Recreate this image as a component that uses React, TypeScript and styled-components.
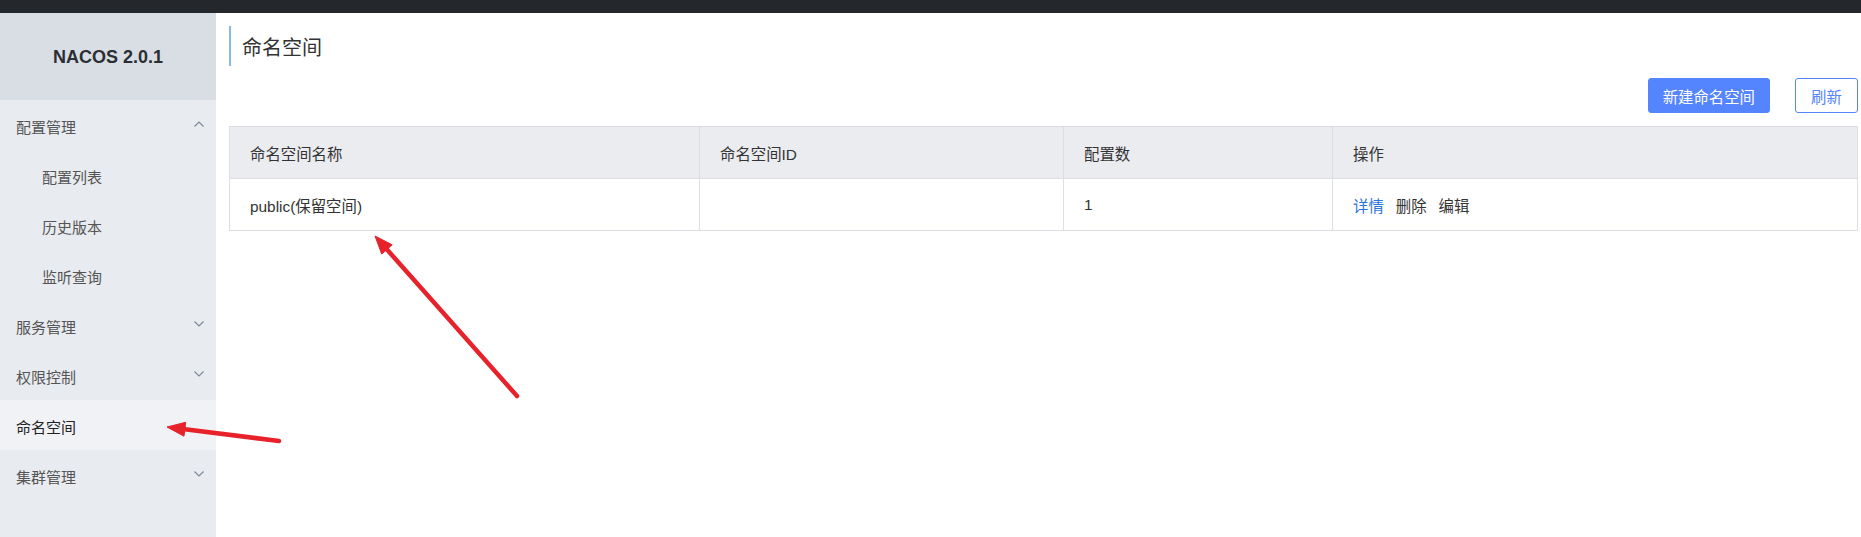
import React from 'react'
import styled, { createGlobalStyle } from 'styled-components'

const GlobalStyle = createGlobalStyle`
  html, body {
    margin: 0;
    padding: 0;
    background: #fff;
  }
  body {
    font-family: 'Liberation Sans', 'Noto Sans CJK SC', sans-serif;
    font-size: 15.4px;
    color: #333;
  }
`

const Page = styled.div`
  position: relative;
  width: 1861px;
  height: 537px;
  display: flex;
  flex-direction: column;
  overflow: hidden;
`

const TopBar = styled.div`
  height: 13px;
  background: #24282d;
  flex-shrink: 0;
`

const Body = styled.div`
  flex: 1;
  display: flex;
`

const Sidebar = styled.aside`
  width: 216px;
  flex-shrink: 0;
  background: #e8ebf0;
  display: flex;
  flex-direction: column;
`

const Logo = styled.div`
  height: 87px;
  background: #d9dee4;
  display: flex;
  align-items: center;
  justify-content: center;
  font-family: 'Liberation Sans', sans-serif;
  font-weight: bold;
  font-size: 18px;
  color: #2b2f33;
  padding-top: 2px;
  box-sizing: border-box;
`

const MenuItem = styled.div<{ sub?: boolean; active?: boolean }>`
  height: 50px;
  display: flex;
  align-items: center;
  justify-content: space-between;
  padding: 3px 12px 0 ${({ sub }) => (sub ? '42px' : '16px')};
  box-sizing: border-box;
  font-size: 15px;
  color: ${({ active }) => (active ? '#222' : '#555')};
  background: ${({ active }) => (active ? '#f0f2f6' : 'transparent')};
`

const Chevron = styled.svg`
  width: 10px;
  height: 6px;
  margin-top: -5px;
`

const Main = styled.main`
  flex: 1;
  padding: 13px 4px 0 13px;
  display: flex;
  flex-direction: column;
`

const Heading = styled.div`
  height: 40px;
  border-left: 2px solid #87b8e6;
  padding-left: 11px;
  display: flex;
  align-items: center;
  font-size: 20px;
  color: #333;
`

const Toolbar = styled.div`
  margin-top: 12px;
  display: flex;
  justify-content: flex-end;
  gap: 25px;
`

const Button = styled.button<{ primary?: boolean }>`
  height: 35px;
  padding: 0 ${({ primary }) => (primary ? '14px' : '15px')};
  min-width: ${({ primary }) => (primary ? '121px' : '63px')};
  border-radius: 3px;
  border: 1px solid #5584ff;
  background: ${({ primary }) => (primary ? '#5584ff' : '#fff')};
  color: ${({ primary }) => (primary ? '#fff' : '#5584ff')};
  font-family: 'Liberation Sans', 'Noto Sans CJK SC', sans-serif;
  font-size: 15.4px;
  cursor: pointer;
`

const Table = styled.table`
  margin-top: 13px;
  width: 1628px;
  border-collapse: collapse;
  table-layout: fixed;
`

const Th = styled.th`
  height: 51px;
  padding: 0 20px;
  text-align: left;
  font-weight: normal;
  background: #ebecf0;
  border: 1px solid #dcdee3;
  color: #333;
`

const Td = styled.td`
  height: 51px;
  padding: 0 20px;
  border: 1px solid #dcdee3;
  color: #333;
`

const Action = styled.a<{ link?: boolean }>`
  color: ${({ link }) => (link ? '#2a74db' : '#333')};
  margin-right: 12px;
  text-decoration: none;
`

const Overlay = styled.svg`
  position: absolute;
  left: 0;
  top: 0;
  pointer-events: none;
`

function ChevronIcon({ up }: { up?: boolean }) {
  return (
    <Chevron viewBox="0 0 10 6">
      <polyline
        points={up ? '0.5,5.5 5,1 9.5,5.5' : '0.5,0.5 5,5 9.5,0.5'}
        fill="none"
        stroke="#7b8696"
        strokeWidth="1.1"
      />
    </Chevron>
  )
}

type Item = { label: string; sub?: boolean; active?: boolean; arrow?: 'up' | 'down' }

const menu: Item[] = [
  { label: '配置管理', arrow: 'up' },
  { label: '配置列表', sub: true },
  { label: '历史版本', sub: true },
  { label: '监听查询', sub: true },
  { label: '服务管理', arrow: 'down' },
  { label: '权限控制', arrow: 'down' },
  { label: '命名空间', active: true },
  { label: '集群管理', arrow: 'down' },
]

function Arrow({ tip, tail }: { tip: [number, number]; tail: [number, number] }) {
  const dx = tip[0] - tail[0]
  const dy = tip[1] - tail[1]
  const len = Math.hypot(dx, dy)
  const ux = dx / len
  const uy = dy / len
  const bx = tip[0] - ux * 18
  const by = tip[1] - uy * 18
  const nx = -uy
  const ny = ux
  const pts = `${tip[0]},${tip[1]} ${bx + nx * 7},${by + ny * 7} ${bx - nx * 7},${by - ny * 7}`
  return (
    <g fill="#e8222b" stroke="#e8222b">
      <line x1={tail[0]} y1={tail[1]} x2={bx + ux * 2} y2={by + uy * 2} strokeWidth="4.5" strokeLinecap="round" />
      <polygon points={pts} strokeWidth="1" strokeLinejoin="round" />
    </g>
  )
}

export default function App() {
  return (
    <Page>
      <GlobalStyle />
      <TopBar />
      <Body>
        <Sidebar>
          <Logo>NACOS 2.0.1</Logo>
          {menu.map((item) => (
            <MenuItem key={item.label} sub={item.sub} active={item.active}>
              <span>{item.label}</span>
              {item.arrow && <ChevronIcon up={item.arrow === 'up'} />}
            </MenuItem>
          ))}
        </Sidebar>
        <Main>
          <Heading>命名空间</Heading>
          <Toolbar>
            <Button primary>新建命名空间</Button>
            <Button>刷新</Button>
          </Toolbar>
          <Table>
            <colgroup>
              <col style={{ width: 470 }} />
              <col style={{ width: 364 }} />
              <col style={{ width: 269 }} />
              <col style={{ width: 525 }} />
            </colgroup>
            <thead>
              <tr>
                <Th>命名空间名称</Th>
                <Th>命名空间ID</Th>
                <Th>配置数</Th>
                <Th>操作</Th>
              </tr>
            </thead>
            <tbody>
              <tr>
                <Td>public(保留空间)</Td>
                <Td></Td>
                <Td>1</Td>
                <Td>
                  <Action link>详情</Action>
                  <Action>删除</Action>
                  <Action>编辑</Action>
                </Td>
              </tr>
            </tbody>
          </Table>
        </Main>
      </Body>
      <Overlay width="1861" height="537" viewBox="0 0 1861 537">
        <Arrow tip={[375, 236]} tail={[517, 396]} />
        <Arrow tip={[167, 427]} tail={[279, 441]} />
      </Overlay>
    </Page>
  )
}
